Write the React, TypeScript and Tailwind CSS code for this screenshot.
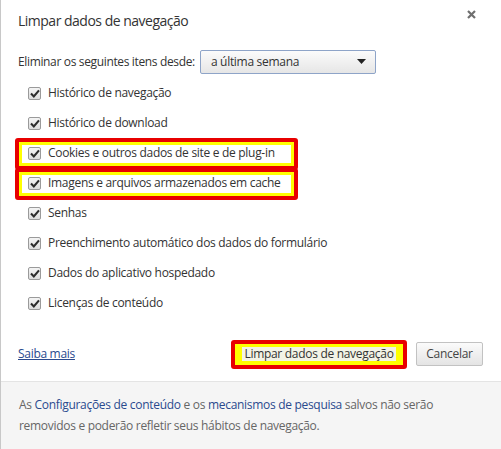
import React from 'react';

const items = [
  { label: 'Histórico de navegação' },
  { label: 'Histórico de download' },
  { label: 'Cookies e outros dados de site e de plug-in', mark: true },
  { label: 'Imagens e arquivos armazenados em cache', mark: true },
  { label: 'Senhas' },
  { label: 'Preenchimento automático dos dados do formulário' },
  { label: 'Dados do aplicativo hospedado' },
  { label: 'Licenças de conteúdo' },
];

function Check() {
  return (
    <span className="flex h-[13px] w-[13px] shrink-0 items-center justify-center rounded-[2px] border border-[#9a9a9a] bg-gradient-to-b from-[#f4f4f4] to-[#dcdcdc]">
      <svg width="10" height="9" viewBox="0 0 10 9">
        <path d="M1 4.6 L3.8 7.4 L9 1.4" fill="none" stroke="#2b2b2b" strokeWidth="2.1" />
      </svg>
    </span>
  );
}

export default function App() {
  return (
    <div className="flex h-[449px] w-[501px] flex-col border-l border-[#c8c8c8] bg-white text-[12px] text-[#333] [font-family:'Open_Sans',sans-serif]">
      <div className="flex h-[40px] items-center justify-between pl-[17px] pr-[25px] pt-[1px]">
        <h1 className="text-[14px] tracking-[-0.5px] text-[#333]">Limpar dados de navegação</h1>
        <svg width="9" height="9" viewBox="0 0 9 9" className="-mt-[13px]">
          <path d="M1 1 L8 8 M8 1 L1 8" stroke="#6f6f6f" strokeWidth="2.2" />
        </svg>
      </div>
      <div className="flex h-[38px] items-center pl-[17px] pt-[5px]">
        <span className="tracking-[-0.35px]">Eliminar os seguintes itens desde:</span>
        <div className="ml-[5px] flex h-[24px] w-[176px] items-center justify-between rounded-[2px] border border-[#8ea4c8] bg-gradient-to-b from-[#fbfbfb] to-[#e6e6e6] pl-[10px] pr-[9px]">
          <span className="tracking-[-0.3px]">a última semana</span>
          <svg width="9" height="5" viewBox="0 0 9 5">
            <path d="M0 0 H9 L4.5 5 Z" fill="#222" />
          </svg>
        </div>
      </div>
      <div className="flex flex-col">
        {items.map((it) => (
          <div key={it.label} className="relative flex h-[30px] items-center pl-[27px]">
            {it.mark && (
              <div className="absolute left-[14px] top-[0px] h-[32px] w-[283px] rounded-[3px] border-[4px] border-[#e80000]">
                <div className="h-full w-full border-[3px] border-[#ffff00] bg-white" />
              </div>
            )}
            <div className="relative flex items-center">
              <Check />
              <span className="ml-[7px] tracking-[-0.3px]">{it.label}</span>
            </div>
          </div>
        ))}
      </div>
      <div className="flex h-[63px] items-center justify-between pt-[9px] pl-[17px] pr-[18px]">
        <a href="#" className="tracking-[-0.3px] text-[#2a4a8e] underline">Saiba mais</a>
        <div className="flex items-center gap-[9px]">
          <div className="flex h-[29px] w-[176px] items-center justify-center rounded-[3px] border-[4px] border-[#e80000] bg-[#ffff00]">
            <span className="bg-[#f3f3e6] px-[2px] leading-[14px] tracking-[-0.3px]">Limpar dados de navegação</span>
          </div>
          <button className="flex h-[24px] w-[67px] items-center justify-center rounded-[2px] border border-[#c2c2c2] bg-gradient-to-b from-[#fbfbfb] to-[#e4e4e4] text-[#444] tracking-[-0.3px]">
            Cancelar
          </button>
        </div>
      </div>
      <div className="flex-1 border-t border-[#e4e4e4] bg-[#f5f5f5] pl-[18px] pr-[20px] pt-[12px] leading-[21px] text-[#666] tracking-[-0.3px]">
        <p>
          As <span className="text-[#2a4a8e]">Configurações de conteúdo</span> e os{' '}
          <span className="text-[#2a4a8e]">mecanismos de pesquisa</span> salvos não serão
        </p>
        <p>removidos e poderão refletir seus hábitos de navegação.</p>
      </div>
    </div>
  );
}
